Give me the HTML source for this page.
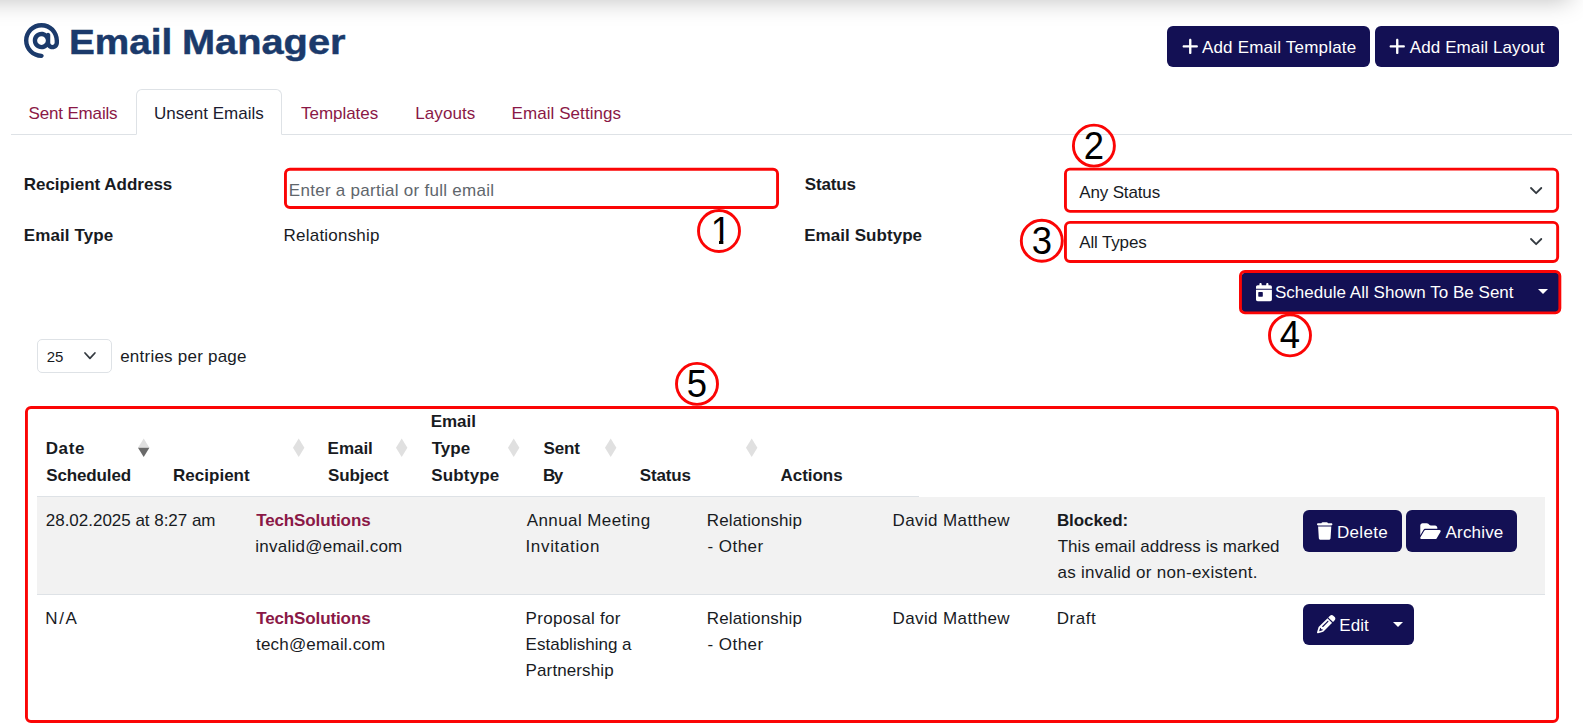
<!DOCTYPE html>
<html lang="en"><head><meta charset="utf-8"><title>Email Manager</title><meta name="viewport" content="width=1583"><style>
html,body{margin:0;padding:0;background:#fff}
body{width:1583px;height:723px;position:relative;overflow:hidden;font-family:"Liberation Sans",sans-serif;font-size:17px;line-height:17px;color:#181b1f}
body *{box-sizing:border-box}
.abs,.t,.i,.anno,.btn,.box,.row,.cell{position:absolute}
.t{white-space:nowrap;margin:0;font-weight:400}
.b{font-weight:700} .m{color:#8a1846} .w{color:#fff}
.i{display:block;overflow:visible}
.anno{left:0;top:0;pointer-events:none}
.btn{background:#131054;border-radius:6px;border:0;padding:0;margin:0;font:inherit;color:#fff;display:block;overflow:visible;text-align:left}
.topshadow{position:absolute;left:-60px;top:-60px;width:1630px;height:60px;background:#fff;box-shadow:0 0 24px rgba(0,0,0,.26)}
h1{margin:0;position:absolute;left:0;top:0;font-size:34.5px;line-height:34.5px;font-weight:700;color:#1b3a6b;white-space:nowrap}
h1 span{position:absolute;transform-origin:0 0;-webkit-text-stroke:.45px #1b3a6b}
.tabs{list-style:none;margin:0;padding:0}
.tabs li{list-style:none}
.tabline{left:11px;top:54px;width:1561px;height:1px;background:#dee2e6}
.tabact{border:1px solid #dee2e6;border-bottom-color:#fff;border-radius:6px 6px 0 0;background:#fff}
.sel{border:1px solid #dee2e6;border-radius:5px;background:#fff}
.thead-line{background:#dee2e6}
.caret{width:0;height:0;border-top:5.3px solid #fff;border-left:5.3px solid transparent;border-right:5.3px solid transparent}
.row1{background:#f2f2f2;border-bottom:1px solid #dee2e6}
</style></head><body>
<div class="topshadow"></div>
<header>
<h1><svg class="i" style="left:24.00px;top:23.30px" width="35" height="35" viewBox="0 0 512 512" aria-hidden="true"><path fill="#1b3a6b" d="M256 64C150 64 64 150 64 256s86 192 192 192c17.700 0 32 14.300 32 32s-14.300 32-32 32C114.600 512 0 397.400 0 256S114.600 0 256 0S512 114.600 512 256v32c0 53-43 96-96 96c-29.300 0-55.600-13.200-73.200-33.900C320 371.100 289.500 384 256 384c-70.700 0-128-57.300-128-128s57.300-128 128-128c27.900 0 53.700 8.900 74.700 24.100c5.700-5 13.100-8.100 21.300-8.100c17.700 0 32 14.300 32 32v80 32c0 17.700 14.300 32 32 32s32-14.300 32-32V256c0-106-86-192-192-192zm64 192a64 64 0 1 0 -128 0 64 64 0 1 0 128 0z"/></svg><span style="left:69.0px;top:24.9px;transform:scaleX(1.1232)">Email</span> <span style="left:182.2px;top:24.9px;transform:scaleX(1.1522)">Manager</span></h1>
<button class="btn" type="button" style="left:1167px;top:26px;width:203px;height:41px"><svg class="i" style="left:14.55px;top:10.75px" width="16.5" height="18.9" viewBox="0 0 448 512" aria-hidden="true"><path fill="#fff" d="M256 80c0-17.700-14.300-32-32-32s-32 14.300-32 32V224H48c-17.700 0-32 14.300-32 32s14.300 32 32 32H192V432c0 17.700 14.300 32 32 32s32-14.300 32-32V288H400c17.700 0 32-14.300 32-32s-14.300-32-32-32H256V80z"/></svg><span class="t w" style="left:34.9px;top:13.0px;letter-spacing:0.20px">Add Email Template</span></button>
<button class="btn" type="button" style="left:1375px;top:26px;width:184px;height:41px"><svg class="i" style="left:14.05px;top:10.75px" width="16.5" height="18.9" viewBox="0 0 448 512" aria-hidden="true"><path fill="#fff" d="M256 80c0-17.700-14.300-32-32-32s-32 14.300-32 32V224H48c-17.700 0-32 14.300-32 32s14.300 32 32 32H192V432c0 17.700 14.300 32 32 32s32-14.300 32-32V288H400c17.700 0 32-14.300 32-32s-14.300-32-32-32H256V80z"/></svg><span class="t w" style="left:34.8px;top:13.0px;letter-spacing:0.10px">Add Email Layout</span></button>
</header>
<nav>
<ul class="abs tabs"  style="left:0px;top:80px;width:1583px;height:60px"><li class="abs tabline"></li><li><span class="t m" style="left:28.6px;top:25.0px;letter-spacing:-0.17px">Sent Emails</span></li><li class="abs tabact"  style="left:136px;top:9px;width:146px;height:46px"><span class="t" style="left:16.9px;top:15.0px;letter-spacing:0.03px;color:#1b1b2f">Unsent Emails</span></li><li><span class="t m" style="left:301.0px;top:25.0px;letter-spacing:-0.03px">Templates</span></li><li><span class="t m" style="left:415.2px;top:25.0px;letter-spacing:0.10px">Layouts</span></li><li><span class="t m" style="left:511.6px;top:25.0px;letter-spacing:0.06px">Email Settings</span></li></ul>
</nav>
<form>
<label class="lab"><span class="t b" style="left:23.7px;top:176.0px;letter-spacing:0.00px">Recipient Address</span></label><div class="abs field" role="textbox" aria-placeholder="Enter a partial or full email" style="left:285px;top:169px;width:493px;height:39px"><span class="t" style="left:3.8px;top:13.0px;letter-spacing:0.28px;color:#60666c">Enter a partial or full email</span></div>
<label class="lab"><span class="t b" style="left:23.7px;top:227.0px;letter-spacing:0.12px">Email Type</span></label><span class="t" style="left:283.6px;top:227.0px;letter-spacing:0.21px">Relationship</span>
<label class="lab"><span class="t b" style="left:804.7px;top:176.0px;letter-spacing:-0.14px">Status</span></label><div class="abs field" role="combobox" style="left:1065px;top:169px;width:493px;height:43px"><span class="t" style="left:14.2px;top:15.0px;letter-spacing:-0.14px">Any Status</span><svg class="i" style="left:463.65px;top:16.80px" width="14.30" height="9.20" aria-hidden="true"><polyline points="2,2 7.15,7.20 12.30,2" fill="none" stroke="#343a40" stroke-width="1.8" stroke-linecap="round" stroke-linejoin="round"/></svg></div>
<label class="lab"><span class="t b" style="left:804.2px;top:227.0px;letter-spacing:0.06px">Email Subtype</span></label><div class="abs field" role="combobox" style="left:1065px;top:222px;width:493px;height:40px"><span class="t" style="left:14.2px;top:12.0px;letter-spacing:-0.14px">All Types</span><svg class="i" style="left:463.65px;top:14.80px" width="14.30" height="9.20" aria-hidden="true"><polyline points="2,2 7.15,7.20 12.30,2" fill="none" stroke="#343a40" stroke-width="1.8" stroke-linecap="round" stroke-linejoin="round"/></svg></div>
<button class="btn" type="button" style="left:1241px;top:271.5px;width:318.5px;height:41px"><svg class="i" style="left:14.50px;top:11.55px" width="15.9" height="18.2" viewBox="0 0 448 512" aria-hidden="true"><path fill="#fff" d="M128 0c17.700 0 32 14.300 32 32V64H288V32c0-17.700 14.300-32 32-32s32 14.300 32 32V64h48c26.500 0 48 21.500 48 48v48H0V112C0 85.500 21.500 64 48 64H96V32c0-17.700 14.300-32 32-32zM0 192H448V464c0 26.500-21.500 48-48 48H48c-26.500 0-48-21.500-48-48V192zm80 64c-8.800 0-16 7.200-16 16v96c0 8.800 7.200 16 16 16h96c8.800 0 16-7.200 16-16V272c0-8.800-7.200-16-16-16H80z"/></svg><span class="t w" style="left:33.9px;top:12.5px;letter-spacing:0.03px">Schedule All Shown To Be Sent</span><i class="abs caret" style="left:296.8px;top:17.8px"></i></button>
</form>
<section>
<div class="abs sel" role="combobox" style="left:37px;top:339px;width:75px;height:34px"><span class="t" style="left:8.8px;top:9.0px;letter-spacing:-0.23px;font-size:15px;line-height:15px">25</span><svg class="i" style="left:45.05px;top:10.60px" width="13.90" height="9.40" aria-hidden="true"><polyline points="2,2 6.95,7.40 11.90,2" fill="none" stroke="#343a40" stroke-width="1.75" stroke-linecap="round" stroke-linejoin="round"/></svg></div><span class="t" style="left:120.2px;top:348.0px;letter-spacing:0.23px">entries per page</span>
<div role="table">
<div class="abs" role="row" style="left:37px;top:409px;width:1508px;height:88px"><div role="columnheader"><span class="t b" style="left:8.7px;top:31.0px;letter-spacing:0.63px">Date</span><span class="t b" style="left:9.2px;top:58.0px;letter-spacing:-0.12px">Scheduled</span><svg class="i" style="left:101.2px;top:29px" width="11.4" height="20" aria-hidden="true"><polygon points="5.7,0.5 11.4,9.7 0,9.7" fill="#e0e0e0"/><polygon points="0,9.7 11.4,9.7 5.7,19.1" fill="#6a6a6a"/></svg></div><div role="columnheader"><span class="t b" style="left:136.0px;top:58.0px;letter-spacing:0.02px">Recipient</span><svg class="i" style="left:256.1px;top:29px" width="11.4" height="20" aria-hidden="true"><polygon points="5.7,0.5 11.4,9.7 5.7,19.1 0,9.7" fill="#e0e0e0"/></svg></div><div role="columnheader"><span class="t b" style="left:290.6px;top:31.0px;letter-spacing:-0.04px">Email</span><span class="t b" style="left:291.1px;top:58.0px;letter-spacing:-0.12px">Subject</span><svg class="i" style="left:359.0px;top:29px" width="11.4" height="20" aria-hidden="true"><polygon points="5.7,0.5 11.4,9.7 5.7,19.1 0,9.7" fill="#e0e0e0"/></svg></div><div role="columnheader"><span class="t b" style="left:393.7px;top:4.0px;letter-spacing:-0.01px">Email</span><span class="t b" style="left:394.7px;top:31.0px;letter-spacing:0.04px">Type</span><span class="t b" style="left:394.2px;top:58.0px;letter-spacing:0.17px">Subtype</span><svg class="i" style="left:471.2px;top:29px" width="11.4" height="20" aria-hidden="true"><polygon points="5.7,0.5 11.4,9.7 5.7,19.1 0,9.7" fill="#e0e0e0"/></svg></div><div role="columnheader"><span class="t b" style="left:506.5px;top:31.0px;letter-spacing:-0.18px">Sent</span><span class="t b" style="left:506.0px;top:58.0px;letter-spacing:-1.48px">By</span><svg class="i" style="left:568.0px;top:29px" width="11.4" height="20" aria-hidden="true"><polygon points="5.7,0.5 11.4,9.7 5.7,19.1 0,9.7" fill="#e0e0e0"/></svg></div><div role="columnheader"><span class="t b" style="left:602.8px;top:58.0px;letter-spacing:-0.16px">Status</span><svg class="i" style="left:708.8px;top:29px" width="11.4" height="20" aria-hidden="true"><polygon points="5.7,0.5 11.4,9.7 5.7,19.1 0,9.7" fill="#e0e0e0"/></svg></div><div role="columnheader"><span class="t b" style="left:743.6px;top:58.0px;letter-spacing:-0.05px">Actions</span></div><div class="abs thead-line" style="left:0;top:87px;width:882px;height:1px"></div></div>
<div class="abs row1" role="row" style="left:37px;top:497px;width:1508px;height:98px"><div role="cell"><span class="t" style="left:8.8px;top:15.0px;letter-spacing:-0.02px">28.02.2025 at 8:27 am</span></div><div role="cell"><span class="t b m" style="left:219.2px;top:15.0px;letter-spacing:-0.12px">TechSolutions</span><span class="t" style="left:218.2px;top:41.0px;letter-spacing:0.26px">invalid@email.com</span></div><div role="cell"><span class="t" style="left:489.7px;top:15.0px;letter-spacing:0.41px">Annual Meeting</span><span class="t" style="left:488.5px;top:41.0px;letter-spacing:0.65px">Invitation</span></div><div role="cell"><span class="t" style="left:669.8px;top:15.0px;letter-spacing:0.14px">Relationship</span><span class="t" style="left:670.5px;top:41.0px;letter-spacing:0.46px">- Other</span></div><div role="cell"><span class="t" style="left:855.6px;top:15.0px;letter-spacing:0.38px">David Matthew</span></div><div role="cell"><span class="t b" style="left:1019.9px;top:15.0px;letter-spacing:-0.08px">Blocked:</span><span class="t" style="left:1020.7px;top:41.0px;letter-spacing:0.03px">This email address is marked</span><span class="t" style="left:1020.4px;top:67.0px;letter-spacing:0.28px">as invalid or non-existent.</span></div><div role="cell"><button class="btn" type="button" style="left:1266px;top:13px;width:99px;height:42px"><svg class="i" style="left:14.00px;top:12.20px" width="15.4" height="17.9" viewBox="0 0 448 512" aria-hidden="true"><path fill="#fff" d="M135.200 17.700L128 32H32C14.300 32 0 46.300 0 64S14.300 96 32 96H416c17.700 0 32-14.300 32-32s-14.300-32-32-32H320l-7.200-14.300C307.400 6.800 296.300 0 284.200 0H163.800c-12.100 0-23.200 6.800-28.600 17.700zM416 128H32L53.200 467c1.600 25.300 22.600 45 47.900 45H346.900c25.300 0 46.300-19.700 47.900-45L416 128z"/></svg><span class="t w" style="left:34.0px;top:14.0px;letter-spacing:0.31px">Delete</span></button><button class="btn" type="button" style="left:1369px;top:13px;width:111px;height:42px"><svg class="i" style="left:14.00px;top:12.20px" width="21" height="18.2" viewBox="0 0 576 512" aria-hidden="true"><path fill="#fff" d="M88.700 223.800L0 375.800V96C0 60.700 28.700 32 64 32H181.500c17 0 33.300 6.700 45.300 18.700l26.500 26.500c12 12 28.300 18.700 45.300 18.700H416c35.300 0 64 28.700 64 64v32H144c-22.800 0-43.800 12.100-55.300 31.800zm27.600 16.100C122.100 230 132.600 224 144 224H544c11.500 0 22 6.100 27.700 16.100s5.700 22.200-.1 32.100l-112 192C453.900 474 443.400 480 432 480H32c-11.500 0-22-6.100-27.700-16.100s-5.700-22.200 .1-32.100l112-192z"/></svg><span class="t w" style="left:39.5px;top:14.0px;letter-spacing:0.19px">Archive</span></button></div></div>
<div class="abs" role="row" style="left:37px;top:595px;width:1508px;height:98px"><div role="cell"><span class="t" style="left:8.2px;top:15.0px;letter-spacing:1.69px">N/A</span></div><div role="cell"><span class="t b m" style="left:219.2px;top:15.0px;letter-spacing:-0.12px">TechSolutions</span><span class="t" style="left:219.1px;top:41.0px;letter-spacing:0.17px">tech@email.com</span></div><div role="cell"><span class="t" style="left:488.6px;top:15.0px;letter-spacing:0.29px">Proposal for</span><span class="t" style="left:488.6px;top:41.0px;letter-spacing:0.01px">Establishing a</span><span class="t" style="left:488.6px;top:67.0px;letter-spacing:0.11px">Partnership</span></div><div role="cell"><span class="t" style="left:669.8px;top:15.0px;letter-spacing:0.14px">Relationship</span><span class="t" style="left:670.5px;top:41.0px;letter-spacing:0.46px">- Other</span></div><div role="cell"><span class="t" style="left:855.6px;top:15.0px;letter-spacing:0.38px">David Matthew</span></div><div role="cell"><span class="t" style="left:1019.7px;top:15.0px;letter-spacing:0.54px">Draft</span></div><div role="cell"><button class="btn" type="button" style="left:1266px;top:9px;width:111px;height:41px"><svg class="i" style="left:13.80px;top:11.40px" width="18.4" height="18.4" viewBox="0 0 512 512" aria-hidden="true"><path fill="#fff" d="M410.300 231l11.300-11.300-33.900-33.900-62.100-62.100L291.700 89.800l-11.300 11.300-22.600 22.600L58.600 322.900c-10.400 10.400-18 23.300-22.200 37.400L1 480.700c-2.500 8.400-.2 17.500 6.100 23.700s15.300 8.500 23.700 6.100l120.300-35.400c14.100-4.200 27-11.800 37.400-22.200L387.700 253.700 410.300 231zM160 399.400l-9.100 22.700c-4 3.100-8.500 5.400-13.300 6.900L59.400 452l23-78.100c1.400-4.900 3.800-9.400 6.900-13.300l22.700-9.100v32c0 8.800 7.200 16 16 16h32zM362.700 18.700L348.300 33.200 325.700 55.800 314.300 67.100l33.900 33.900 62.100 62.100 33.900 33.900 11.300-11.300 22.600-22.600 14.500-14.500c25-25 25-65.500 0-90.500L453.300 18.700c-25-25-65.500-25-90.500 0zm-47.400 168l-144 144c-6.200 6.200-16.400 6.200-22.600 0s-6.200-16.400 0-22.600l144-144c6.200-6.200 16.400-6.200 22.600 0s6.200 16.400 0 22.600z"/></svg><span class="t w" style="left:36.3px;top:13.0px;letter-spacing:0.08px">Edit</span><i class="abs caret" style="left:89.7px;top:17.8px"></i></button></div></div>
</div>
</section>
<svg class="anno" width="1583" height="723" viewBox="0 0 1583 723" aria-hidden="false"><defs><clipPath id="nofoot"><polygon points="-15,-40 15,-40 15,-3.7 2.55,-3.6 2.55,3 -1.95,3 -1.95,-3.6 -15,-3.7"/></clipPath></defs><g fill="none" stroke="#fb0505" stroke-width="2.9"><rect x="285.45" y="169.25" width="492.10" height="38.20" rx="4.5" ry="4.5"/><rect x="1065.45" y="169.15" width="492.20" height="42.20" rx="4.5" ry="4.5"/><rect x="1065.45" y="222.35" width="492.20" height="39.20" rx="4.5" ry="4.5"/><rect x="1240.45" y="271.45" width="319.40" height="41.40" rx="4.5" ry="4.5"/><rect x="26.45" y="407.45" width="1531.10" height="314.00" rx="4.5" ry="4.5"/><circle cx="719" cy="231" r="20.50"/><circle cx="1093.9" cy="145.65" r="20.50"/><circle cx="1041.8" cy="240.8" r="20.50"/><circle cx="1290" cy="335.35" r="20.50"/><circle cx="697" cy="383.9" r="20.50"/></g><g fill="#000" font-family="Liberation Sans, sans-serif" font-size="38" text-anchor="middle"><text transform="translate(720.9 244.0) scale(.96 1)" clip-path="url(#nofoot)">1</text><text transform="translate(1093.9 158.7) scale(.96 1)">2</text><text transform="translate(1041.8 253.8) scale(.96 1)">3</text><text transform="translate(1290 348.4) scale(.96 1)">4</text><text transform="translate(697 396.9) scale(.96 1)">5</text></g></svg>
</body></html>
